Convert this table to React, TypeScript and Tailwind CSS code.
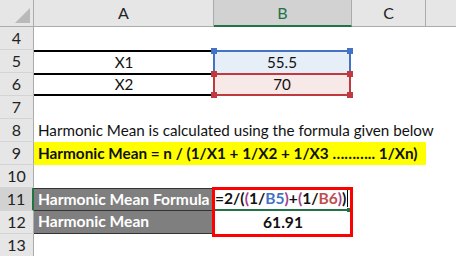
import React from "react";

const FONT = { fontFamily: "Lato, 'Open Sans', sans-serif" };

function RowHead({ n, active }: { n: number; active?: boolean }) {
  return (
    <div
      className={
        "w-[34px] h-full shrink-0 flex items-center justify-center text-[16px] text-[#222] border-b border-[#d4d4d4] font-normal " +
        (active ? "bg-[#d2d2d2] border-r-2 border-r-[#217346]" : "bg-[#e6e6e6] border-r border-r-[#ababab]")
      }
    >
      {n}
    </div>
  );
}

function Handle({ pos, color }: { pos: string; color: string }) {
  return <div className={"absolute w-[6px] h-[6px] z-10 " + pos + " " + color} />;
}

export default function App() {
  return (
    <div className="w-[456px] h-[256px] overflow-hidden bg-white relative" style={FONT}>
      {/* header */}
      <div className="flex h-[27px]">
        <div className="w-[34px] h-full shrink-0 bg-[#e6e6e6] border-r border-b border-[#ababab] relative">
          <svg className="absolute right-[3px] bottom-[3px]" width="15" height="15" viewBox="0 0 15 15">
            <polygon points="15,0 15,15 0,15" fill="#b9b9b9" />
          </svg>
        </div>
        <div className="w-[180px] h-full shrink-0 bg-[#e6e6e6] border-r border-b border-[#ababab] flex items-center justify-center text-[16px] text-[#222]">
          A
        </div>
        <div className="w-[138px] h-full shrink-0 bg-[#d2d2d2] border-r border-r-[#ababab] border-b-2 border-b-[#217346] flex items-center justify-center text-[16px] text-[#217346]">
          B
        </div>
        <div className="w-[74px] h-full shrink-0 bg-[#e6e6e6] border-r border-b border-[#ababab] flex items-center justify-center text-[16px] text-[#222]">
          C
        </div>
        <div className="flex-1 h-full bg-[#e6e6e6] border-b border-[#ababab]" />
      </div>

      {/* row 4 */}
      <div className="flex h-[23px]">
        <RowHead n={4} />
      </div>

      {/* row 5 */}
      <div className="flex h-[23px] text-[15.2px] text-[#111]">
        <RowHead n={5} />
        <div className="w-[180px] h-full shrink-0 border-t-2 border-black flex items-center justify-center">X1</div>
        <div className="w-[138px] h-full shrink-0 -ml-px border-t-2 border-x-2 border-[#4472c4] bg-[#e6eef8] flex items-center justify-center relative">
          55.5
          <Handle pos="-left-[4px] -top-[4px]" color="bg-[#4472c4]" />
          <Handle pos="-right-[4px] -top-[4px]" color="bg-[#4472c4]" />
        </div>
      </div>

      {/* row 6 */}
      <div className="flex h-[23px] text-[15.2px] text-[#111]">
        <RowHead n={6} />
        <div className="w-[180px] h-full shrink-0 border-t-2 border-b-2 border-black flex items-center justify-center">X2</div>
        <div className="w-[138px] h-full shrink-0 -ml-px border-2 border-[#c0393f] bg-[#f8e9e9] flex items-center justify-center relative">
          70
          <Handle pos="-left-[4px] -top-[4px]" color="bg-[#c0393f]" />
          <Handle pos="-right-[4px] -top-[4px]" color="bg-[#c0393f]" />
          <Handle pos="-left-[4px] -bottom-[4px]" color="bg-[#c0393f]" />
          <Handle pos="-right-[4px] -bottom-[4px]" color="bg-[#c0393f]" />
        </div>
      </div>

      {/* row 7 */}
      <div className="flex h-[23px]">
        <RowHead n={7} />
      </div>

      {/* row 8 */}
      <div className="flex h-[23px] text-[15.2px] text-[#111]">
        <RowHead n={8} />
        <div className="flex-1 h-full flex items-center pl-[4px] whitespace-nowrap overflow-visible">
          Harmonic Mean is calculated using the formula given below
        </div>
      </div>

      {/* row 9 */}
      <div className="flex h-[23px] text-[15.3px] text-[#111]">
        <RowHead n={9} />
        <div className="w-[392px] h-full shrink-0 bg-[#ffff00] flex items-center pl-[4px] whitespace-nowrap font-bold">
          Harmonic Mean = n / (1/X1 + 1/X2 + 1/X3 ……….. 1/Xn)
        </div>
      </div>

      {/* row 10 */}
      <div className="flex h-[23px]">
        <RowHead n={10} />
      </div>

      {/* rows 11-12 */}
      <div className="relative">
        <div className="flex h-[23px] text-[15.6px]">
          <RowHead n={11} active />
          <div className="w-[180px] h-full shrink-0 bg-[#7f7f7f] border-t border-b border-[#333] flex items-center pl-[4px] text-white font-bold whitespace-nowrap">
            Harmonic Mean Formula
          </div>
          <div className="w-[138px] h-full shrink-0 flex items-center pl-[1px] font-bold text-[#111] whitespace-nowrap relative border-b-2 border-[#217346]">
            <span>=2/(</span>
            <span className="text-[#a0428c]">(</span>
            <span>1/</span>
            <span className="text-[#4472c4]">B5</span>
            <span className="text-[#a0428c]">)</span>
            <span>+</span>
            <span className="text-[#a0428c]">(</span>
            <span>1/</span>
            <span className="text-[#c0504d]">B6</span>
            <span className="text-[#a0428c]">)</span>
            <span>)</span>
            <span className="inline-block w-px h-[17px] bg-black ml-[1px]" />
            <div className="absolute right-[1px] -bottom-[3px] w-[4px] h-[4px] bg-[#217346]" />
          </div>
        </div>
        <div className="flex h-[23px] text-[15.6px]">
          <RowHead n={12} />
          <div className="w-[180px] h-full shrink-0 bg-[#7f7f7f] border-b border-[#333] flex items-center pl-[4px] text-white font-bold whitespace-nowrap">
            Harmonic Mean
          </div>
          <div className="w-[138px] h-full shrink-0 flex items-center justify-center font-bold text-[#111]">61.91</div>
        </div>
        <div className="absolute left-[212px] -top-[1px] w-[141px] h-[50px] border-[3px] border-[#ff0000] pointer-events-none" />
      </div>

      {/* row 13 */}
      <div className="flex h-[23px]">
        <RowHead n={13} />
      </div>
    </div>
  );
}
